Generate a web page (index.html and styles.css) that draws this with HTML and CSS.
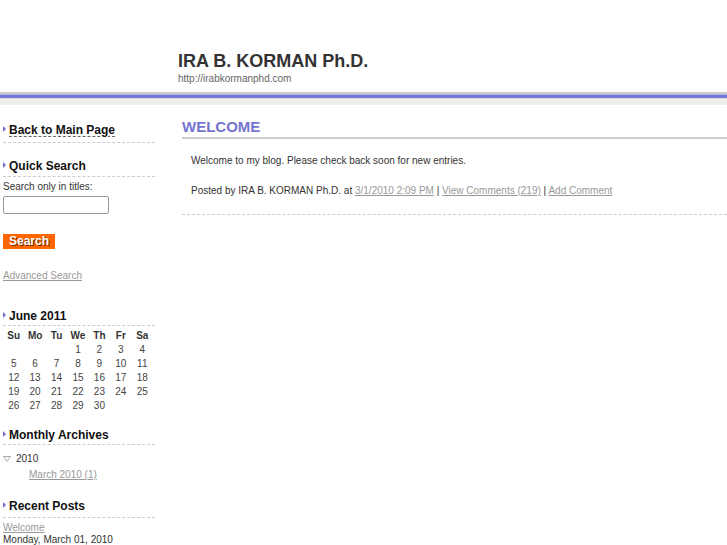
FILE: index.html
```html
<!DOCTYPE html>
<html lang="en">
<head>
    <meta charset="UTF-8">
    <title>IRA B. KORMAN Ph.D.</title>
    <link rel="stylesheet" href="styles.css">
</head>
<body>
    <div class="header">
        <h1 class="site-title">IRA B. KORMAN Ph.D.</h1>
        <div class="site-url">http://irabkormanphd.com</div>
    </div>
    <div class="band"></div>

    <div class="page">
        <div class="sidebar">
            <h2 class="side-title first"><a href="#" class="main-link">Back to Main Page</a></h2>

            <h2 class="side-title">Quick Search</h2>
            <div class="search-label">Search only in titles:</div>
            <input type="text" class="search-input">
            <button class="search-btn">Search</button>
            <a href="#" class="gray-link adv">Advanced Search</a>

            <h2 class="side-title cal-title">June 2011</h2>
            <table class="calendar">
                <tr><th>Su</th><th>Mo</th><th>Tu</th><th>We</th><th>Th</th><th>Fr</th><th>Sa</th></tr>
                <tr><td></td><td></td><td></td><td>1</td><td>2</td><td>3</td><td>4</td></tr>
                <tr><td>5</td><td>6</td><td>7</td><td>8</td><td>9</td><td>10</td><td>11</td></tr>
                <tr><td>12</td><td>13</td><td>14</td><td>15</td><td>16</td><td>17</td><td>18</td></tr>
                <tr><td>19</td><td>20</td><td>21</td><td>22</td><td>23</td><td>24</td><td>25</td></tr>
                <tr><td>26</td><td>27</td><td>28</td><td>29</td><td>30</td><td></td><td></td></tr>
            </table>

            <h2 class="side-title arch-title">Monthly Archives</h2>
            <div class="year">
                <svg width="8" height="6" viewBox="0 0 8 6"><path d="M0.5 0.5 H7.5 L4 5.5 Z" fill="none" stroke="#aaa" stroke-width="1"/></svg>
                <span>2010</span>
            </div>
            <div class="month"><a href="#" class="gray-link">March 2010 (1)</a></div>

            <h2 class="side-title recent-title">Recent Posts</h2>
            <div class="recent"><a href="#" class="gray-link">Welcome</a></div>
            <div class="recent-date">Monday, March 01, 2010</div>
        </div>

        <div class="main">
            <h2 class="post-title">WELCOME</h2>
            <div class="post-body">
                <p class="post-text">Welcome to my blog. Please check back soon for new entries.</p>
                <p class="post-meta">Posted by IRA B. KORMAN Ph.D. at <a href="#" class="gray-link">3/1/2010 2:09 PM</a> | <a href="#" class="gray-link">View Comments (219)</a> | <a href="#" class="gray-link">Add Comment</a></p>
            </div>
        </div>
    </div>
</body>
</html>
```

FILE: styles.css
```css
body {
    margin: 0;
    font-family: "Liberation Sans", Arial, sans-serif;
    font-size: 10px;
    color: #333;
    background-color: white;
    overflow: hidden;
}
.header {
    height: 92px;
    box-sizing: border-box;
    padding: 50px 0 0 178px;
}
.site-title {
    margin: 0;
    font-size: 18px;
    line-height: 22px;
    font-weight: bold;
    color: #333;
}
.site-url {
    margin-top: 1px;
    font-size: 10px;
    line-height: 12px;
    color: #666;
}
.band {
    height: 13px;
    background: linear-gradient(to bottom, #cbcbcb 0 2px, #aeaee0 2px 3px, #7878da 3px 6px, #dcdcdc 6px 7px, #efefef 7px 13px);
}
.page {
    display: flex;
}
.sidebar {
    width: 152px;
    margin-left: 3px;
    flex-shrink: 0;
}
.main {
    flex: 1;
    margin-left: 27px;
}
.side-title {
    margin: 16px 0 0 0;
    font-size: 12px;
    line-height: 15px;
    font-weight: bold;
    color: #111;
    padding-bottom: 2px;
    border-bottom: 1px dashed #ccc;
}
.side-title:before {
    content: "";
    display: inline-block;
    width: 0;
    height: 0;
    border-top: 3px solid transparent;
    border-bottom: 3px solid transparent;
    border-left: 3px solid #7070d4;
    margin-right: 3px;
    vertical-align: 2px;
}
.side-title.first {
    margin-top: 18px;
    padding-bottom: 4px;
}
.main-link {
    color: #111;
    text-decoration: underline dashed #666;
    text-underline-offset: 2px;
}
.search-label {
    margin-top: 4px;
    line-height: 12px;
}
.search-input {
    display: block;
    margin-top: 3px;
    width: 106px;
    height: 18px;
    box-sizing: border-box;
    border: 1px solid #999;
    border-radius: 2px;
    padding: 0 3px;
}
.search-btn {
    display: block;
    margin-top: 20px;
    width: 52px;
    height: 15px;
    padding: 0;
    border: none;
    background-color: #ff6600;
    color: white;
    font-family: inherit;
    font-size: 12px;
    line-height: 15px;
    font-weight: bold;
    text-shadow: 1px 1px 0 #6a2a00;
}
.gray-link {
    color: #999;
    text-decoration: underline;
}
.adv {
    display: block;
    margin-top: 21px;
    line-height: 12px;
}
.cal-title {
    margin-top: 27px;
    padding-bottom: 1px;
}
.calendar {
    margin-top: 3px;
    width: 150px;
    border-collapse: collapse;
    table-layout: fixed;
}
.calendar th,
.calendar td {
    padding: 0;
    height: 14px;
    line-height: 14px;
    text-align: center;
    font-size: 10px;
    color: #444;
}
.calendar th {
    font-weight: bold;
    color: #333;
}
.arch-title {
    margin-top: 15px;
    padding-bottom: 1px;
}
.year {
    margin-top: 8px;
    line-height: 12px;
    display: flex;
    align-items: center;
    gap: 5px;
}
.month {
    margin-top: 4px;
    padding-left: 26px;
    line-height: 12px;
}
.recent-title {
    margin-top: 18px;
    padding-bottom: 3px;
}
.recent {
    margin-top: 4px;
    line-height: 12px;
}
.recent-date {
    line-height: 12px;
}
.post-title {
    margin: 13px 0 0 0;
    font-size: 15px;
    line-height: 18px;
    font-weight: bold;
    color: #7474d0;
    padding-bottom: 1px;
    border-bottom: 2px solid #ccc;
}
.post-body {
    padding: 16px 0 17px 9px;
    border-bottom: 1px dashed #ccc;
}
.post-text,
.post-meta {
    margin: 0;
    line-height: 12px;
}
.post-meta {
    margin-top: 18px;
}
```
